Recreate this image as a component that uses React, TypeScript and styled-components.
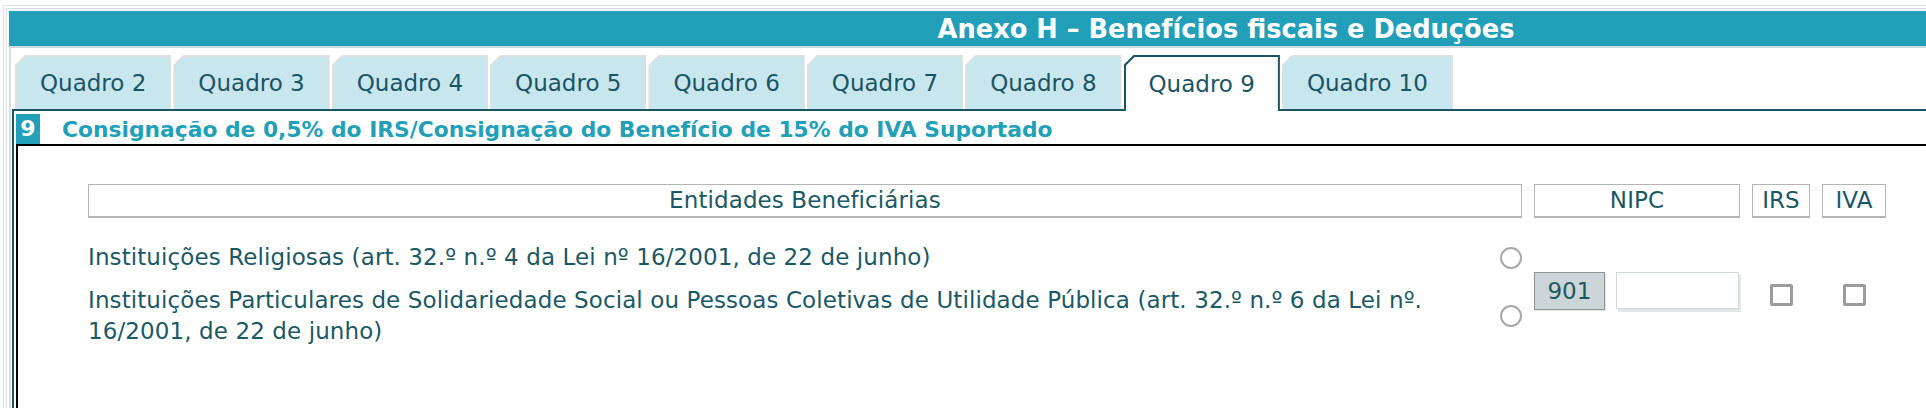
import React from "react";
import styled, { createGlobalStyle } from "styled-components";

const GlobalStyle = createGlobalStyle`
  html, body {
    margin: 0;
    padding: 0;
    background: #ffffff;
    overflow: hidden;
  }
  body {
    font-family: "DejaVu Sans", Verdana, sans-serif;
  }
`;

const TEAL = "#219eb8";
const DARK = "#1b5563";
const TEXT = "#1b5866";
const FRAME = "#d7dfe2";

const Page = styled.div`
  width: 2440px;
  padding: 5px 0 0 3px;
`;

const OuterFrame = styled.div`
  border-top: 1px solid ${FRAME};
  border-left: 1px solid ${FRAME};
  padding: 2px 0 0 2px;
`;

const InnerFrame = styled.div`
  border-top: 1px solid ${FRAME};
  border-left: 1px solid ${FRAME};
  padding: 2px 0 0 2px;
`;

const TitleBar = styled.div`
  height: 35px;
  background: ${TEAL};
  border-bottom: 2px solid #d3dadd;
  color: #ffffff;
  font-weight: bold;
  font-size: 25.7px;
  line-height: 37px;
  text-align: center;
`;

const Body = styled.div`
  border-left: 2px solid ${FRAME};
  padding: 7px 0 0 1px;
`;

const TabRow = styled.div`
  display: flex;
  align-items: flex-end;
  gap: 2px;
  padding-left: 3px;
  border-bottom: 2px solid ${DARK};
  height: 54px;
`;

const TabEdge = styled.div<{ $active?: boolean }>`
  height: ${(p) => (p.$active ? "54px" : "52px")};
  margin-bottom: ${(p) => (p.$active ? "-2px" : "0")};
  padding: 2px 2px 0 2px;
  background: ${(p) => (p.$active ? DARK : "#d9e1e3")};
  clip-path: polygon(10px 0, 100% 0, 100% 100%, 0 100%, 0 10px);
`;

const TabFace = styled.div<{ $active?: boolean }>`
  height: 100%;
  box-sizing: border-box;
  display: flex;
  align-items: center;
  padding: 0 23px;
  background: ${(p) => (p.$active ? "#ffffff" : "#c8e6ee")};
  clip-path: polygon(9px 0, 100% 0, 100% 100%, 0 100%, 0 9px);
  color: #1a5464;
  font-size: 23px;
  white-space: nowrap;
`;

const Panel = styled.div`
  border-left: 2px solid ${DARK};
  padding: 3px 0 0 2px;
`;

const HeadingRow = styled.div`
  display: flex;
  align-items: center;
  height: 30px;
`;

const Badge = styled.div`
  width: 24px;
  height: 30px;
  background: ${TEAL};
  color: #ffffff;
  font-weight: bold;
  font-size: 22px;
  line-height: 30px;
  text-align: center;
`;

const Heading = styled.div`
  margin-left: 22px;
  font-weight: bold;
  font-size: 21.8px;
  color: #22a0b8;
  white-space: nowrap;
`;

const Content = styled.div`
  border-top: 2px solid #000000;
  border-left: 2px solid #000000;
  min-height: 262px;
  padding: 38px 0 0 70px;
`;

const Grid = styled.div`
  display: grid;
  grid-template-columns: 1434px 206px 58px 64px;
  column-gap: 12px;
  row-gap: 12px;
  font-size: 23px;
  line-height: 31px;
  letter-spacing: 0.1px;
  color: ${TEXT};
`;

const HeadCell = styled.div`
  box-sizing: border-box;
  height: 34px;
  border: 1px solid #b4b4b4;
  border-bottom-width: 2px;
  text-align: center;
  line-height: 31px;
  margin-bottom: 12px;
`;

const EntityCell = styled.div<{ $row: number }>`
  grid-column: 1;
  grid-row: ${(p) => p.$row};
  display: flex;
  align-items: center;
  gap: 40px;
`;

const EntityText = styled.div`
  flex: 1;
`;

const Radio = styled.span`
  flex: none;
  width: 22px;
  height: 22px;
  box-sizing: border-box;
  border: 2.5px solid #a8a8a8;
  border-radius: 50%;
  background: #ffffff;
`;

const SpanCell = styled.div<{ $col: number }>`
  grid-column: ${(p) => p.$col};
  grid-row: 2 / 4;
  align-self: center;
  display: flex;
  align-items: center;
  justify-content: ${(p) => (p.$col === 2 ? "flex-start" : "center")};
  margin-bottom: ${(p) => (p.$col === 2 ? "8px" : "0")};
`;

const CodeBox = styled.div`
  width: 71px;
  height: 38px;
  box-sizing: border-box;
  background: #ccd5d7;
  border: 1px solid #8d9494;
  box-shadow: 1px 1px 0 #e0e6e7;
  text-align: center;
  line-height: 36px;
  color: ${TEXT};
`;

const NipcInput = styled.input`
  margin: 0 0 0 11px;
  width: 123px;
  height: 37px;
  box-sizing: border-box;
  border: 1px solid #cfd8da;
  box-shadow: 2px 3px 0 #e2e8e9;
  background: #ffffff;
  outline: none;
`;

const Check = styled.span`
  width: 23px;
  height: 22px;
  box-sizing: border-box;
  border: 3px solid #9b9b9b;
  border-radius: 2px;
  background: #ffffff;
`;

const tabs = ["2", "3", "4", "5", "6", "7", "8", "9", "10"];

export default function App() {
  return (
    <>
      <GlobalStyle />
      <Page>
        <OuterFrame>
          <InnerFrame>
            <TitleBar>Anexo H – Benefícios fiscais e Deduções</TitleBar>
            <Body>
              <TabRow>
                {tabs.map((n) => (
                  <TabEdge key={n} $active={n === "9"}>
                    <TabFace $active={n === "9"}>Quadro {n}</TabFace>
                  </TabEdge>
                ))}
              </TabRow>
              <Panel>
                <HeadingRow>
                  <Badge>9</Badge>
                  <Heading>
                    Consignação de 0,5% do IRS/Consignação do Benefício de 15% do IVA Suportado
                  </Heading>
                </HeadingRow>
                <Content>
                  <Grid>
                    <HeadCell>Entidades Beneficiárias</HeadCell>
                    <HeadCell>NIPC</HeadCell>
                    <HeadCell>IRS</HeadCell>
                    <HeadCell>IVA</HeadCell>

                    <EntityCell $row={2}>
                      <EntityText>
                        Instituições Religiosas (art. 32.º n.º 4 da Lei nº 16/2001, de 22 de junho)
                      </EntityText>
                      <Radio />
                    </EntityCell>
                    <EntityCell $row={3}>
                      <EntityText>
                        Instituições Particulares de Solidariedade Social ou Pessoas Coletivas de
                        Utilidade Pública (art. 32.º n.º 6 da Lei nº. 16/2001, de 22 de junho)
                      </EntityText>
                      <Radio />
                    </EntityCell>

                    <SpanCell $col={2}>
                      <CodeBox>901</CodeBox>
                      <NipcInput type="text" />
                    </SpanCell>
                    <SpanCell $col={3}>
                      <Check />
                    </SpanCell>
                    <SpanCell $col={4}>
                      <Check />
                    </SpanCell>
                  </Grid>
                </Content>
              </Panel>
            </Body>
          </InnerFrame>
        </OuterFrame>
      </Page>
    </>
  );
}
